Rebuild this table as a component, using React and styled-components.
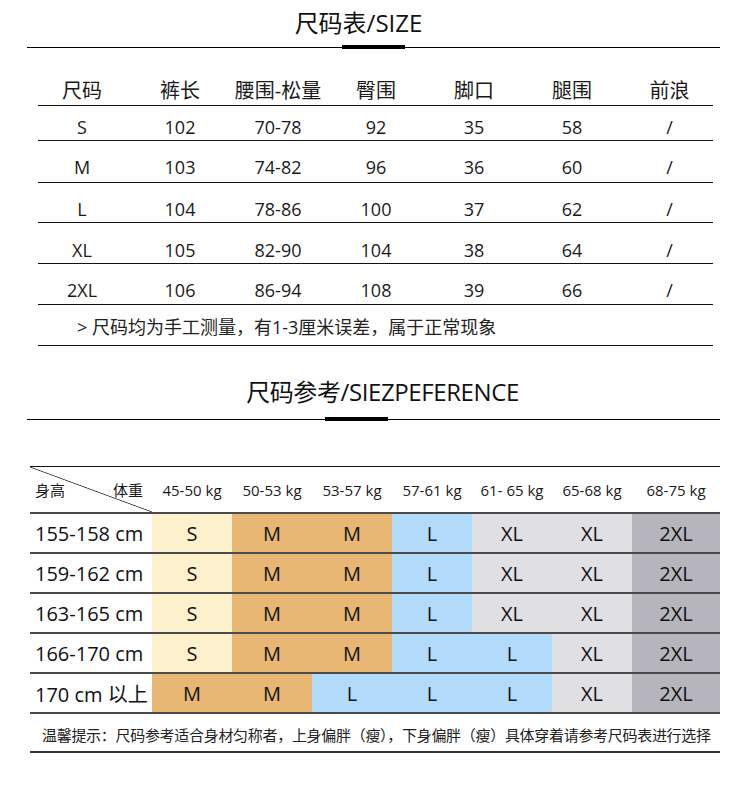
import styled, { createGlobalStyle } from "styled-components";

const GlobalStyle = createGlobalStyle`
  body {
    margin: 0;
    background: #fff;
    font-family: "Open Sans", "Noto Sans CJK SC", sans-serif;
    color: #111;
  }
`;

const sizeRows = [
  { size: "S", vals: ["102", "70-78", "92", "35", "58", "/"], h: 35, pt: 11 },
  { size: "M", vals: ["103", "74-82", "96", "36", "60", "/"], h: 42, pt: 16 },
  { size: "L", vals: ["104", "78-86", "100", "37", "62", "/"], h: 40, pt: 16 },
  { size: "XL", vals: ["105", "82-90", "104", "38", "64", "/"], h: 41, pt: 17 },
  { size: "2XL", vals: ["106", "86-94", "108", "39", "66", "/"], h: 41, pt: 16 },
];

const headers = ["尺码", "裤长", "腰围-松量", "臀围", "脚口", "腿围", "前浪"];

const weights = ["45-50 kg", "50-53 kg", "53-57 kg", "57-61 kg", "61- 65 kg", "65-68 kg", "68-75 kg"];

const refRows = [
  { height: "155-158 cm", sizes: ["S", "M", "M", "L", "XL", "XL", "2XL"] },
  { height: "159-162 cm", sizes: ["S", "M", "M", "L", "XL", "XL", "2XL"] },
  { height: "163-165 cm", sizes: ["S", "M", "M", "L", "XL", "XL", "2XL"] },
  { height: "166-170 cm", sizes: ["S", "M", "M", "L", "L", "XL", "2XL"] },
  { height: "170 cm 以上", sizes: ["M", "M", "L", "L", "L", "XL", "2XL"] },
];

const sizeColors = {
  S: "#fdf0cd",
  M: "#e8b774",
  L: "#b2dbfb",
  XL: "#e0e0e3",
  "2XL": "#b6b4bd",
};

export default function App() {
  return (
    <Page>
      <GlobalStyle />
      <Heading $pt={8} $shift={-15}>尺码表/SIZE</Heading>
      <Divider $mt={7}>
        <Rule $w={315} />
        <Bar />
        <Rule />
      </Divider>

      <SizeTable>
        <SizeRow $h={57} $pt={30}>
          {headers.map((t) => (
            <HeadCell key={t}>{t}</HeadCell>
          ))}
        </SizeRow>
        {sizeRows.map((r) => (
          <SizeRow key={r.size} $h={r.h} $pt={r.pt}>
            <ValueCell>{r.size}</ValueCell>
            {r.vals.map((v, i) => (
              <ValueCell key={i}>{v}</ValueCell>
            ))}
          </SizeRow>
        ))}
        <NoteRow>&gt; 尺码均为手工测量，有1-3厘米误差，属于正常现象</NoteRow>
      </SizeTable>

      <Heading $pt={31} $shift={9} $ls={-0.4}>尺码参考/SIEZPEFERENCE</Heading>
      <Divider $mt={10}>
        <Rule $w={298} />
        <Bar />
        <Rule />
      </Divider>

      <RefTable>
        <RefHead>
          <Corner>
            <span>身高</span>
            <span>体重</span>
          </Corner>
          {weights.map((w) => (
            <WeightCell key={w}>{w}</WeightCell>
          ))}
        </RefHead>
        {refRows.map((r) => (
          <RefRow key={r.height}>
            <HeightCell>{r.height}</HeightCell>
            {r.sizes.map((s, i) => (
              <SizeCell key={i} $bg={sizeColors[s]}>
                {s}
              </SizeCell>
            ))}
          </RefRow>
        ))}
        <Tip>温馨提示：尺码参考适合身材匀称者，上身偏胖（瘦），下身偏胖（瘦）具体穿着请参考尺码表进行选择</Tip>
      </RefTable>
    </Page>
  );
}

const Page = styled.div`
  width: 750px;
  height: 801px;
  overflow: hidden;
`;

const Heading = styled.h2`
  margin: 0 0 0 27px;
  width: 693px;
  box-sizing: border-box;
  padding-top: ${(p) => p.$pt}px;
  padding-left: ${(p) => (p.$shift > 0 ? p.$shift * 2 : 0)}px;
  padding-right: ${(p) => (p.$shift < 0 ? -p.$shift * 2 : 0)}px;
  font-size: 24px;
  font-weight: 400;
  line-height: 30px;
  letter-spacing: ${(p) => p.$ls || 0}px;
  text-align: center;
  color: #111;
`;

const Divider = styled.div`
  display: flex;
  align-items: center;
  margin: ${(p) => p.$mt}px 0 0 27px;
  width: 693px;
  height: 4px;
`;

const Rule = styled.div`
  flex: ${(p) => (p.$w ? `0 0 ${p.$w}px` : "1")};
  height: 1px;
  background: #000;
`;

const Bar = styled.div`
  width: 63px;
  height: 4px;
  background: #000;
`;

const SizeTable = styled.div`
  margin-left: 38px;
  width: 675px;
`;

const SizeRow = styled.div`
  display: grid;
  grid-template-columns: repeat(6, 98px) 87px;
  width: 675px;
  height: ${(p) => p.$h}px;
  padding-top: ${(p) => p.$pt}px;
  box-sizing: border-box;
  border-bottom: 1px solid #111;
`;

const HeadCell = styled.div`
  padding-right: 10px;
  text-align: center;
  font-size: 20px;
  line-height: 24px;
  color: #1a1a1a;
  white-space: nowrap;
  &:last-child {
    padding-right: 0;
  }
`;

const ValueCell = styled.div`
  padding-right: 10px;
  text-align: center;
  font-size: 18px;
  line-height: 20px;
  color: #1a1a1a;
  &:last-child {
    padding-right: 0;
  }
`;

const NoteRow = styled.div`
  height: 41px;
  box-sizing: border-box;
  padding: 11px 0 0 39px;
  font-size: 18px;
  line-height: 22px;
  color: #222;
  border-bottom: 1px solid #111;
  white-space: nowrap;
`;

const RefTable = styled.div`
  margin: 45px 0 0 30px;
  width: 690px;
`;

const grid = `
  display: grid;
  grid-template-columns: 122px repeat(6, 80px) 88px;
`;

const RefHead = styled.div`
  ${grid}
  height: 48px;
  box-sizing: border-box;
  border-top: 1px solid #111;
  border-bottom: 2px solid #4a4a4a;
`;

const Corner = styled.div`
  display: flex;
  justify-content: space-between;
  align-items: center;
  padding: 0 9px 0 5px;
  font-size: 15px;
  color: #1a1a1a;
  background: linear-gradient(
    to top right,
    transparent calc(50% - 0.8px),
    #333 50%,
    transparent calc(50% + 0.8px)
  );
`;

const WeightCell = styled.div`
  display: flex;
  align-items: center;
  justify-content: center;
  font-size: 15px;
  color: #1a1a1a;
  white-space: pre;
`;

const RefRow = styled.div`
  ${grid}
  height: 40px;
  box-sizing: border-box;
  border-bottom: 2px solid #4a4a4a;
`;

const HeightCell = styled.div`
  display: flex;
  align-items: center;
  padding-left: 5px;
  font-size: 20px;
  color: #111;
  white-space: nowrap;
`;

const SizeCell = styled.div`
  display: flex;
  align-items: center;
  justify-content: center;
  background: ${(p) => p.$bg};
  font-size: 20px;
  color: #111;
`;

const Tip = styled.div`
  height: 39px;
  box-sizing: border-box;
  padding: 6px 0 0 12px;
  font-size: 15px;
  line-height: 30px;
  color: #222;
  white-space: nowrap;
  letter-spacing: -0.3px;
  border-bottom: 2px solid #333;
`;
